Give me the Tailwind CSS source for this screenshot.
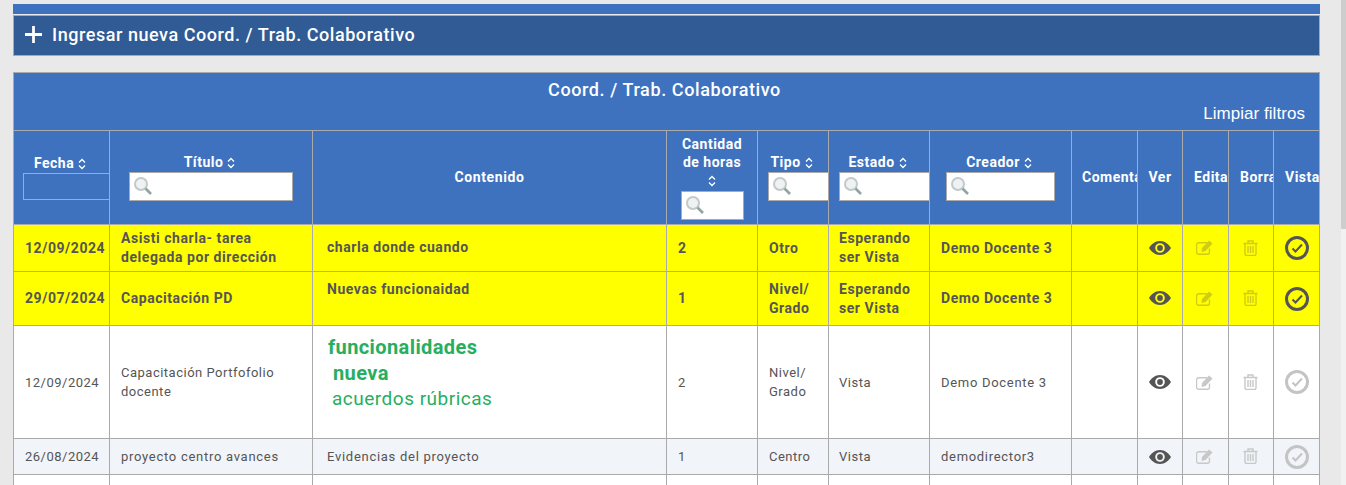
<!DOCTYPE html>
<html lang="es">
<head>
  <meta charset="UTF-8">
  <title>Coord. / Trab. Colaborativo</title>
  <script src="https://cdn.jsdelivr.net/npm/@tailwindcss/browser@4"></script>
</head>
<body class="bg-[#e9e9e9] h-[485px] overflow-hidden font-['Roboto',sans-serif] text-[13px] tracking-[0.5px] text-[#555]">
  <svg class="hidden">
    <symbol id="lupa" viewBox="0 0 18 18">
      <circle cx="7" cy="7" r="6" fill="#eef2f2" stroke="#c3c9c9" stroke-width="2"/>
      <path d="M11.500 11.500l5.500 5.500" stroke="#93a3a3" stroke-width="2.600"/>
    </symbol>
    <symbol id="orden" viewBox="0 0 8 12">
      <path d="M1 4.500L4 1.500l3 3M1 7.500l3 3 3-3" fill="none" stroke="currentColor" stroke-width="1.300"/>
    </symbol>
    <symbol id="ojo" viewBox="0 0 22 14">
      <path fill-rule="evenodd" d="M11 0c5 0 9 3.500 11 7-2 3.500-6 7-11 7S2 10.500 0 7c2-3.500 6-7 11-7zm0 2.200a4.800 4.800 0 100 9.600 4.800 4.800 0 000-9.600z"/>
      <circle cx="11" cy="7" r="2.900"/>
    </symbol>
    <symbol id="editar" viewBox="0 0 18 15">
      <path d="M13.500 8.500V12a2.200 2.200 0 01-2.200 2.200H2.700A2.200 2.200 0 01.500 12V5a2.200 2.200 0 012.200-2.200H11" fill="none" stroke="currentColor" stroke-width="1.400"/>
      <path d="M6 8l7-7.500 3.500 3-7 7.500-4 1z" fill="currentColor"/>
    </symbol>
    <symbol id="basura" viewBox="0 0 15 16">
      <path d="M.5 3.500h14M5 3.500V1h5v2.500M2 3.500V14a1.500 1.500 0 001.500 1.500h8A1.500 1.500 0 0013 14V3.500M5 6v7M7.500 6v7M10 6v7" fill="none" stroke="currentColor" stroke-width="1.400"/>
    </symbol>
    <symbol id="visto" viewBox="0 0 24 24">
      <circle cx="12" cy="12" r="10.500" fill="none" stroke="currentColor" stroke-width="3"/>
      <path d="M7.500 12.500l3 3 6.500-7" fill="none" stroke="currentColor" stroke-width="2"/>
    </symbol>
  </svg>

  <div class="flex">
    <main class="w-[1341px] pl-[13px] pr-[21px] pt-1">
      <div class="h-[10px] bg-[#3e72bf]"></div>
      <div class="mt-[1px] h-[41px] bg-[#315b94] border border-[#aaa] flex items-center pl-[11px] pb-[2px] text-white text-[18px] font-medium tracking-[0.55px]">
        <svg class="w-[17px] h-[17px] mr-[10px]" viewBox="0 0 16 16"><path d="M8 0v16M0 8h16" stroke="white" stroke-width="2.600"/></svg>
        <span>Ingresar nueva Coord. / Trab. Colaborativo</span>
      </div>

      <section class="mt-[16px] bg-[#3e72bf] border-t border-x border-[#aaa] text-white h-[58px] relative">
        <h2 class="pt-[3px] pr-[4px] text-center text-[18px] font-medium tracking-[0.6px]">Coord. / Trab. Colaborativo</h2>
        <a class="absolute right-[14px] top-[28px] font-['Liberation_Sans',sans-serif] text-[17px] tracking-[0.05px]">Limpiar filtros</a>
      </section>

      <table class="table-fixed border-collapse w-[1306px] bg-white">
        <colgroup>
          <col class="w-[96px]"><col class="w-[203px]"><col class="w-[354px]"><col class="w-[91px]"><col class="w-[71px]"><col class="w-[101px]"><col class="w-[142px]"><col class="w-[66px]"><col class="w-[45px]"><col class="w-[46px]"><col class="w-[45px]"><col class="w-[46px]">
        </colgroup>
        <thead class="bg-[#3e72bf] text-white font-bold text-[14px] tracking-[0.5px]">
          <tr class="h-[94px] text-center align-middle">
            <th class="border border-[#aaa] p-0 pb-[3px]">
              <div class="leading-[20px] pr-[3px]">Fecha <svg class="inline w-2 h-3"><use href="#orden"/></svg></div>
              <div class="ml-[9px] w-[87px] h-[27px] border border-[#aaa]"></div>
            </th>
            <th class="border border-[#aaa] p-0 pb-[3px]">
              <div class="leading-[20px] pr-[3px]">Título <svg class="inline w-2 h-3"><use href="#orden"/></svg></div>
              <div class="mx-auto w-[164px] h-[29px] bg-white border border-[#aaa] pl-1 pt-1"><svg class="w-[18px] h-[18px]"><use href="#lupa"/></svg></div>
            </th>
            <th class="border border-[#aaa] p-0 tracking-[0.6px]">Contenido</th>
            <th class="border border-[#aaa] p-0 pb-[1px]">
              <div class="leading-[18px]">Cantidad<br>de horas</div>
              <svg class="block mx-auto w-2 h-3 my-1"><use href="#orden"/></svg>
              <div class="ml-[14px] w-[63px] h-[29px] bg-white border border-[#aaa] pl-1 pt-1"><svg class="w-[18px] h-[18px]"><use href="#lupa"/></svg></div>
            </th>
            <th class="border border-[#aaa] p-0 pb-[3px]">
              <div class="leading-[20px] pr-[3px]">Tipo <svg class="inline w-2 h-3"><use href="#orden"/></svg></div>
              <div class="ml-[10px] w-[61px] h-[29px] bg-white border border-[#aaa] pl-1 pt-1"><svg class="w-[18px] h-[18px]"><use href="#lupa"/></svg></div>
            </th>
            <th class="border border-[#aaa] p-0 pb-[3px]">
              <div class="leading-[20px] pr-[3px]">Estado <svg class="inline w-2 h-3"><use href="#orden"/></svg></div>
              <div class="ml-[10px] w-[91px] h-[29px] bg-white border border-[#aaa] pl-1 pt-1"><svg class="w-[18px] h-[18px]"><use href="#lupa"/></svg></div>
            </th>
            <th class="border border-[#aaa] p-0 pb-[3px]">
              <div class="leading-[20px] pr-[3px]">Creador <svg class="inline w-2 h-3"><use href="#orden"/></svg></div>
              <div class="ml-[16px] w-[109px] h-[29px] bg-white border border-[#aaa] pl-1 pt-1"><svg class="w-[18px] h-[18px]"><use href="#lupa"/></svg></div>
            </th>
            <th class="border border-[#aaa] p-0 pl-[10px] text-left overflow-hidden whitespace-nowrap">Comentarios</th>
            <th class="border border-[#aaa] p-0 overflow-hidden">Ver</th>
            <th class="border border-[#aaa] p-0 pl-[11px] text-left overflow-hidden whitespace-nowrap">Editar</th>
            <th class="border border-[#aaa] p-0 pl-[11px] text-left overflow-hidden whitespace-nowrap">Borrar</th>
            <th class="border border-[#aaa] p-0 pl-[11px] text-left overflow-hidden whitespace-nowrap">Vista</th>
          </tr>
        </thead>
        <tbody class="leading-[19px]">
          <tr class="h-[47px] bg-[#ffff00] font-bold text-[14px] tracking-[0.55px]">
            <td class="border border-[#aaa] pl-[11px] whitespace-nowrap">12/09/2024</td>
            <td class="border border-[#aaa] pl-[11px] pr-[12px]">Asisti charla- tarea delegada por dirección</td>
            <td class="border border-[#aaa] pl-[14px] pb-[2px]">charla donde cuando</td>
            <td class="border border-[#aaa] pl-[11px]">2</td>
            <td class="border border-[#aaa] pl-[11px]">Otro</td>
            <td class="border border-[#aaa] pl-[10px]">Esperando ser Vista</td>
            <td class="border border-[#aaa] pl-[11px]">Demo Docente 3</td>
            <td class="border border-[#aaa]"></td>
            <td class="border border-[#aaa] text-center"><svg class="inline w-[22px] h-[14px] mb-[2px] fill-[#555]"><use href="#ojo"/></svg></td>
            <td class="border border-[#aaa] text-center text-[#d0cc14]"><svg class="inline w-[18px] h-[15px] mb-[2px] mr-[1px]"><use href="#editar"/></svg></td>
            <td class="border border-[#aaa] text-center text-[#d0cc14]"><svg class="inline w-[15px] h-4 mb-[2px] mr-[1px]"><use href="#basura"/></svg></td>
            <td class="border border-[#aaa] text-center text-[#555]"><svg class="inline w-6 h-6"><use href="#visto"/></svg></td>
          </tr>
          <tr class="h-[54px] bg-[#ffff00] font-bold text-[14px] tracking-[0.55px]">
            <td class="border border-[#aaa] pl-[11px] whitespace-nowrap">29/07/2024</td>
            <td class="border border-[#aaa] pl-[11px]">Capacitación PD</td>
            <td class="border border-[#aaa] pl-[14px] align-top pt-[8px]">Nuevas funcionaidad</td>
            <td class="border border-[#aaa] pl-[11px]">1</td>
            <td class="border border-[#aaa] pl-[11px]">Nivel/ Grado</td>
            <td class="border border-[#aaa] pl-[10px]">Esperando ser Vista</td>
            <td class="border border-[#aaa] pl-[11px]">Demo Docente 3</td>
            <td class="border border-[#aaa]"></td>
            <td class="border border-[#aaa] text-center"><svg class="inline w-[22px] h-[14px] mb-[2px] fill-[#555]"><use href="#ojo"/></svg></td>
            <td class="border border-[#aaa] text-center text-[#d0cc14]"><svg class="inline w-[18px] h-[15px] mb-[2px] mr-[1px]"><use href="#editar"/></svg></td>
            <td class="border border-[#aaa] text-center text-[#d0cc14]"><svg class="inline w-[15px] h-4 mb-[2px] mr-[1px]"><use href="#basura"/></svg></td>
            <td class="border border-[#aaa] text-center text-[#555]"><svg class="inline w-6 h-6"><use href="#visto"/></svg></td>
          </tr>
          <tr class="h-[113px] bg-white">
            <td class="border border-[#aaa] pl-[11px] whitespace-nowrap">12/09/2024</td>
            <td class="border border-[#aaa] pl-[11px]">Capacitación Portfofolio docente</td>
            <td class="border border-[#aaa] pl-[14px] pb-[18px] text-[#27ae60] text-[19px] leading-[26px]">
              <div class="font-bold text-[20px] tracking-[0.4px] pl-[1px]">funcionalidades</div>
              <div class="font-bold text-[20px] tracking-[0.4px] pl-[6px]">nueva</div>
              <div class="pl-[5px]">acuerdos rúbricas</div>
            </td>
            <td class="border border-[#aaa] pl-[11px]">2</td>
            <td class="border border-[#aaa] pl-[11px]">Nivel/ Grado</td>
            <td class="border border-[#aaa] pl-[10px]">Vista</td>
            <td class="border border-[#aaa] pl-[11px] tracking-[0.7px]">Demo Docente 3</td>
            <td class="border border-[#aaa]"></td>
            <td class="border border-[#aaa] text-center"><svg class="inline w-[22px] h-[14px] mb-[2px] fill-[#555]"><use href="#ojo"/></svg></td>
            <td class="border border-[#aaa] text-center text-[#c8c8c8]"><svg class="inline w-[18px] h-[15px] mb-[2px] mr-[1px]"><use href="#editar"/></svg></td>
            <td class="border border-[#aaa] text-center text-[#c8c8c8]"><svg class="inline w-[15px] h-4 mb-[2px] mr-[1px]"><use href="#basura"/></svg></td>
            <td class="border border-[#aaa] text-center text-[#c4c4c4]"><svg class="inline w-6 h-6"><use href="#visto"/></svg></td>
          </tr>
          <tr class="h-[36px] bg-[#f1f4f9]">
            <td class="border border-[#aaa] pl-[11px] whitespace-nowrap">26/08/2024</td>
            <td class="border border-[#aaa] pl-[11px] tracking-[0.72px]">proyecto centro avances</td>
            <td class="border border-[#aaa] pl-[14px] tracking-[0.72px]">Evidencias del proyecto</td>
            <td class="border border-[#aaa] pl-[11px]">1</td>
            <td class="border border-[#aaa] pl-[11px]">Centro</td>
            <td class="border border-[#aaa] pl-[10px]">Vista</td>
            <td class="border border-[#aaa] pl-[11px] tracking-[0.7px]">demodirector3</td>
            <td class="border border-[#aaa]"></td>
            <td class="border border-[#aaa] text-center"><svg class="inline w-[22px] h-[14px] mb-[2px] fill-[#555]"><use href="#ojo"/></svg></td>
            <td class="border border-[#aaa] text-center text-[#c8c8c8]"><svg class="inline w-[18px] h-[15px] mb-[2px] mr-[1px]"><use href="#editar"/></svg></td>
            <td class="border border-[#aaa] text-center text-[#c8c8c8]"><svg class="inline w-[15px] h-4 mb-[2px] mr-[1px]"><use href="#basura"/></svg></td>
            <td class="border border-[#aaa] text-center text-[#c4c4c4]"><svg class="inline w-6 h-6"><use href="#visto"/></svg></td>
          </tr>
          <tr class="h-[36px] bg-white">
            <td class="border border-[#aaa]"></td><td class="border border-[#aaa]"></td><td class="border border-[#aaa]"></td><td class="border border-[#aaa]"></td><td class="border border-[#aaa]"></td><td class="border border-[#aaa]"></td><td class="border border-[#aaa]"></td><td class="border border-[#aaa]"></td><td class="border border-[#aaa]"></td><td class="border border-[#aaa]"></td><td class="border border-[#aaa]"></td><td class="border border-[#aaa]"></td>
          </tr>
        </tbody>
      </table>
    </main>
    <div class="w-[5px] h-[485px] bg-[#f1f1f1]">
      <div class="h-[229px] bg-[#cdcdcd]"></div>
    </div>
  </div>
</body>
</html>
